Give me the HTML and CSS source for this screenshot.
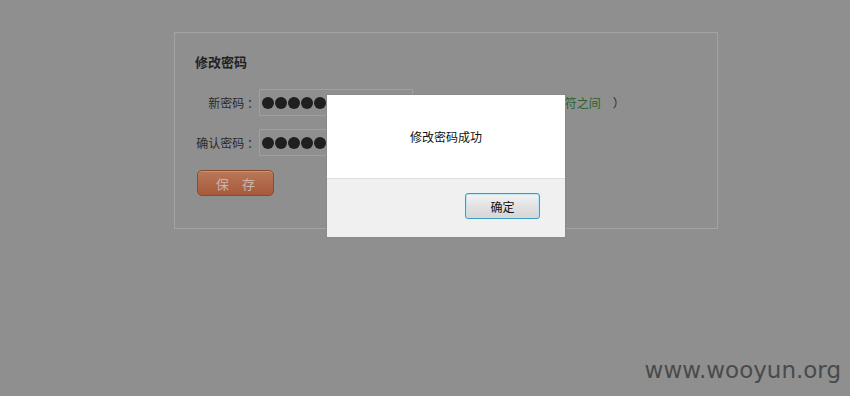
FILE: index.html
```html
<!DOCTYPE html>
<html lang="zh-CN">
<head>
<meta charset="utf-8">
<title>修改密码</title>
<link rel="stylesheet" href="styles.css">
</head>
<body>
<div class="page">
  <div class="panel">
    <h2 class="title">修改密码</h2>
    <div class="row">
      <label class="label">新密码 ：</label>
      <div class="input"><i class="dot"></i><i class="dot"></i><i class="dot"></i><i class="dot"></i><i class="dot"></i><i class="dot"></i></div>
      <span class="hint">（ 密码长度须在6到20个字符之间<span class="paren">）</span></span>
    </div>
    <div class="row">
      <label class="label">确认密码 ：</label>
      <div class="input"><i class="dot"></i><i class="dot"></i><i class="dot"></i><i class="dot"></i><i class="dot"></i><i class="dot"></i></div>
    </div>
    <div class="actions">
      <button class="save">保 存</button>
    </div>
  </div>
</div>
<div class="dialog">
  <div class="dialog-body">修改密码成功</div>
  <div class="dialog-foot">
    <button class="ok">确定</button>
  </div>
</div>
<div class="watermark">www.wooyun.org</div>
</body>
</html>
```
FILE: styles.css
```css
html, body {
  margin: 0;
  padding: 0;
}
body {
  width: 850px;
  height: 396px;
  overflow: hidden;
  background: #8f8f90;
  font-family: "Noto Sans CJK SC", sans-serif;
  font-size: 12px;
  color: #222;
  position: relative;
}
.page {
  padding: 32px 0 0 174px;
}
.panel {
  width: 544px;
  height: 197px;
  border: 1px solid #a3a3a3;
  box-sizing: border-box;
  padding: 18px 0 0 20px;
}
.title {
  margin: 0 0 16px;
  font-size: 13px;
  font-weight: bold;
  color: #222;
  line-height: 22px;
}
.row {
  display: flex;
  align-items: center;
  height: 27px;
  margin-bottom: 13px;
}
.label {
  width: 64px;
  text-align: right;
  color: #2a2a2a;
  white-space: nowrap;
}
.input {
  width: 150px;
  height: 25px;
  border: 1px solid #a0a0a0;
  display: flex;
  align-items: center;
  gap: 1px;
  padding-left: 2px;
  overflow: hidden;
}
.dot {
  flex: none;
  width: 12px;
  height: 12px;
  border-radius: 50%;
  background: #1f1f1f;
}
.hint {
  margin-left: 9px;
  color: #2b632b;
  white-space: nowrap;
}
.paren {
  margin-left: 12px;
  color: #2a2a2a;
}
.actions {
  padding-top: 1px;
}
.save {
  width: 77px;
  height: 26px;
  margin-left: 2px;
  border: 1px solid #8a4a2c;
  border-radius: 5px;
  background: linear-gradient(#b8795a, #a8593a);
  color: #c9b6ad;
  font-family: "Noto Sans CJK SC", sans-serif;
  font-size: 13px;
  letter-spacing: 5px;
  padding: 0 0 0 5px;
  box-shadow: inset 0 1px 0 rgba(255,255,255,0.2);
}
.dialog {
  position: absolute;
  left: 326px;
  top: 94px;
  width: 240px;
  height: 144px;
  background: #fff;
  border: 1px solid #8a8a8a;
  box-sizing: border-box;
  display: flex;
  flex-direction: column;
}
.dialog-body {
  height: 83px;
  box-sizing: border-box;
  padding-top: 33px;
  text-align: center;
  color: #111;
  font-size: 12px;
  line-height: 18px;
}
.dialog-foot {
  flex: 1;
  background: #f0f0f0;
  border-top: 1px solid #dedede;
  display: flex;
  justify-content: flex-end;
  align-items: flex-start;
  padding: 14px 25px 0 0;
}
.ok {
  width: 75px;
  height: 26px;
  border: 1px solid #3c9cc6;
  border-radius: 3px;
  background: linear-gradient(#f4f4f4, #e2e2e2 50%, #d6d6d6);
  box-shadow: inset 0 0 0 1px #bfe6f5;
  font-family: "Noto Sans CJK SC", sans-serif;
  font-size: 12px;
  color: #111;
  padding: 0;
}
.watermark {
  position: absolute;
  right: 9px;
  bottom: 13px;
  font-family: "DejaVu Sans", sans-serif;
  font-size: 23px;
  color: #4a4a4a;
}
```
